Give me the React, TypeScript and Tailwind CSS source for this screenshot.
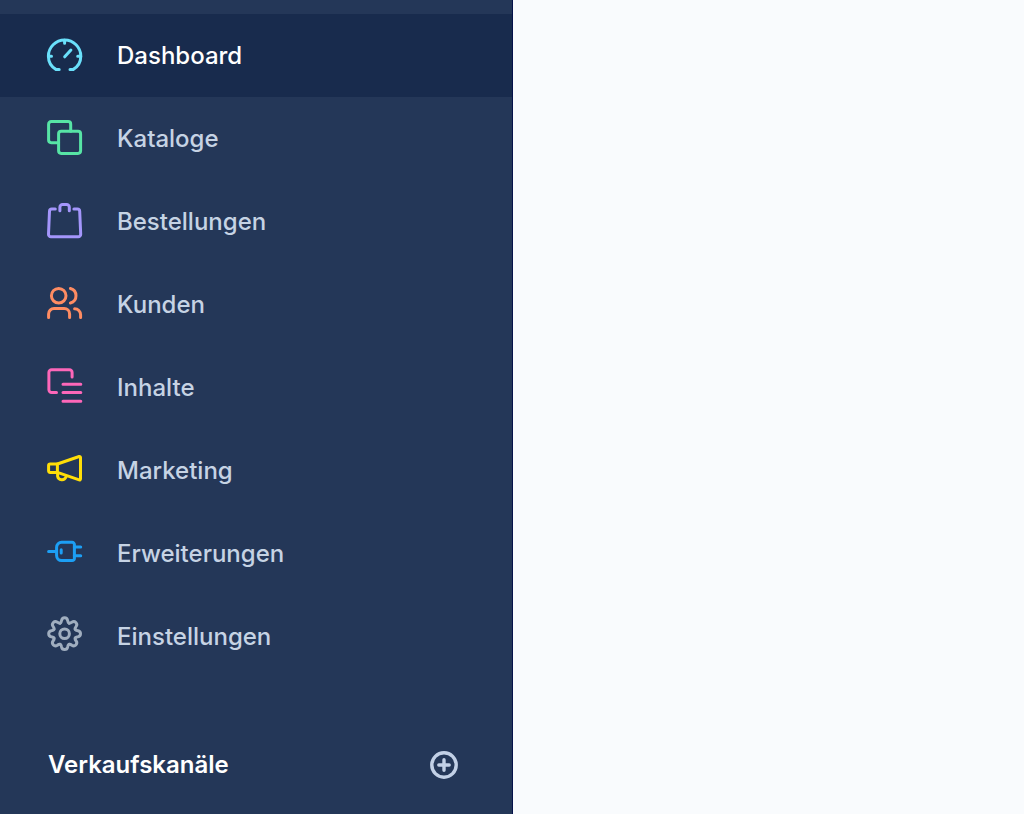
import type { ReactNode } from 'react';

interface NavItem {
  label: string;
  color: string;
  icon: ReactNode;
}

const gearTeeth = [0, 45, 90, 135, 180, 225, 270, 315];

const navItems: NavItem[] = [
  {
    label: 'Dashboard',
    color: 'text-[#6ae0fb]',
    icon: (
      <>
        <path d="M12.2 31.6H9.2C4.6 28.9 1.4 24 1.4 18.2a16.2 16.2 0 0 1 32.4 0c0 5.8-3.2 10.7-7.8 13.4H23" />
        <path d="M17.6 2.2v3M1.5 18.3h3M33.7 18.3h-3M17.7 18.8l6.2-6.8" />
      </>
    ),
  },
  {
    label: 'Kataloge',
    color: 'text-[#57e4a5]',
    icon: (
      <>
        <rect x="11.6" y="10.3" width="22" height="22.1" rx="2.6" />
        <path d="M11.6 21.7H4.2a2.6 2.6 0 0 1-2.6-2.6V3.2A2.6 2.6 0 0 1 4.2.6h16.9a2.6 2.6 0 0 1 2.6 2.6v7.1" />
      </>
    ),
  },
  {
    label: 'Bestellungen',
    color: 'text-[#a496fb]',
    icon: (
      <>
        <path d="M8.3 5H4.8a2.3 2.3 0 0 0-2.3 2.2L1.5 30.2a2.4 2.4 0 0 0 2.4 2.5h27.4a2.4 2.4 0 0 0 2.4-2.5L32.7 7.2A2.3 2.3 0 0 0 30.4 5h-3.5" />
        <path d="M12.9 6.7V3.2A2.7 2.7 0 0 1 15.6.5h4A2.7 2.7 0 0 1 22.3 3.2v3.5" />
      </>
    ),
  },
  {
    label: 'Kunden',
    color: 'text-[#ff8c62]',
    icon: (
      <>
        <circle cx="11.7" cy="8.7" r="7.3" />
        <path d="M23.4 1.5a7.5 7.5 0 0 1 0 14.5" />
        <path d="M1.6 30.6V27A5.4 5.4 0 0 1 7 21.6h10.2a5.4 5.4 0 0 1 5.4 5.4v3.6" />
        <path d="M27.6 21.8a6 6 0 0 1 6 6v2.8" />
      </>
    ),
  },
  {
    label: 'Inhalte',
    color: 'text-[#fd67b9]',
    icon: (
      <>
        <path d="M9.5 22.4H4.6A2.7 2.7 0 0 1 1.9 19.7V2.4A2.7 2.7 0 0 1 4.6-.3h17.8a2.7 2.7 0 0 1 2.7 2.7v4.7" />
        <path d="M16 14.2h17.8M16 22.6h17.8M16 31.3h17.8" />
      </>
    ),
  },
  {
    label: 'Marketing',
    color: 'text-[#ffde08]',
    icon: (
      <>
        <path d="M10.4 11L32.2 3.5a1 1 0 0 1 1.3 1v21.4a1 1 0 0 1-1.3 1L10.4 19.4z" />
        <path d="M10.4 11H3.2a1.6 1.6 0 0 0-1.6 1.6v5.2a1.6 1.6 0 0 0 1.6 1.6h7.2" />
        <path d="M10.6 20v3.2a4.4 4.4 0 0 0 8.4.8" />
      </>
    ),
  },
  {
    label: 'Erweiterungen',
    color: 'text-[#1c9ff5]',
    icon: (
      <>
        <path d="M14.6 6.3h10.6a2.2 2.2 0 0 1 2.2 2.2v13.9a2.2 2.2 0 0 1-2.2 2.2H14.6a5 5 0 0 1-5-5v-8.3a5 5 0 0 1 5-5z" />
        <path d="M1.6 15.4H9.6M27.3 10.9h6.4M27.3 19.7h6.4M14.2 13.7v3.2" />
      </>
    ),
  },
  {
    label: 'Einstellungen',
    color: 'text-[#a0aebf]',
    icon: (
      <g transform="translate(17.6 14.7)">
        <circle r="4.8" />
        {gearTeeth.map((angle) => (
          <path
            key={angle}
            transform={`rotate(${angle})`}
            d="M-4.4-10.6C-3.5-11-3.2-11.8-3-13.3-2.7-15-1.8-15.9 0-15.9S2.7-15 3-13.3C3.2-11.8 3.5-11 4.4-10.6"
          />
        ))}
      </g>
    ),
  },
];

export default function App() {
  const active = 'Dashboard';

  return (
    <div className="flex min-h-screen bg-[#f9fbfd] font-['Inter','Liberation_Sans',sans-serif]">
      {/* Sidebar */}
      <aside className="w-1/2 border-r border-[#06124a] box-content bg-[#243758] pt-3.5">
        <nav>
          <ul>
            {navItems.map((item) => (
              <li key={item.label}>
                <a
                  href="#"
                  aria-current={item.label === active ? 'page' : undefined}
                  className={`flex h-[83px] items-center gap-[35px] pl-[47px] text-2xl font-medium ${
                    item.label === active ? 'bg-[#182b4d] text-white' : 'text-[#c6d3e4]'
                  }`}
                >
                  <svg
                    viewBox="0 0 35 35"
                    className={`size-[35px] shrink-0 overflow-visible ${item.color}`}
                    fill="none"
                    stroke="currentColor"
                    strokeWidth="3"
                    strokeLinecap="round"
                    strokeLinejoin="round"
                    aria-hidden="true"
                  >
                    {item.icon}
                  </svg>
                  {item.label}
                </a>
              </li>
            ))}
          </ul>
        </nav>

        {/* Sales channels */}
        <div className="mt-[51px] flex items-center justify-between py-5 pl-12 pr-[54px]">
          <h2 className="text-2xl font-semibold text-white">Verkaufskanäle</h2>
          <button type="button" aria-label="Verkaufskanal hinzufügen" className="text-[#c2d0e6]">
            <svg
              viewBox="0 0 28 28"
              className="size-7"
              fill="none"
              stroke="currentColor"
              strokeWidth="3.4"
              strokeLinecap="round"
              aria-hidden="true"
            >
              <circle cx="14" cy="14" r="12.2" />
              <path d="M14 8.8v10.4M8.8 14h10.4" />
            </svg>
          </button>
        </div>
      </aside>

      <main className="flex-1" />
    </div>
  );
}
